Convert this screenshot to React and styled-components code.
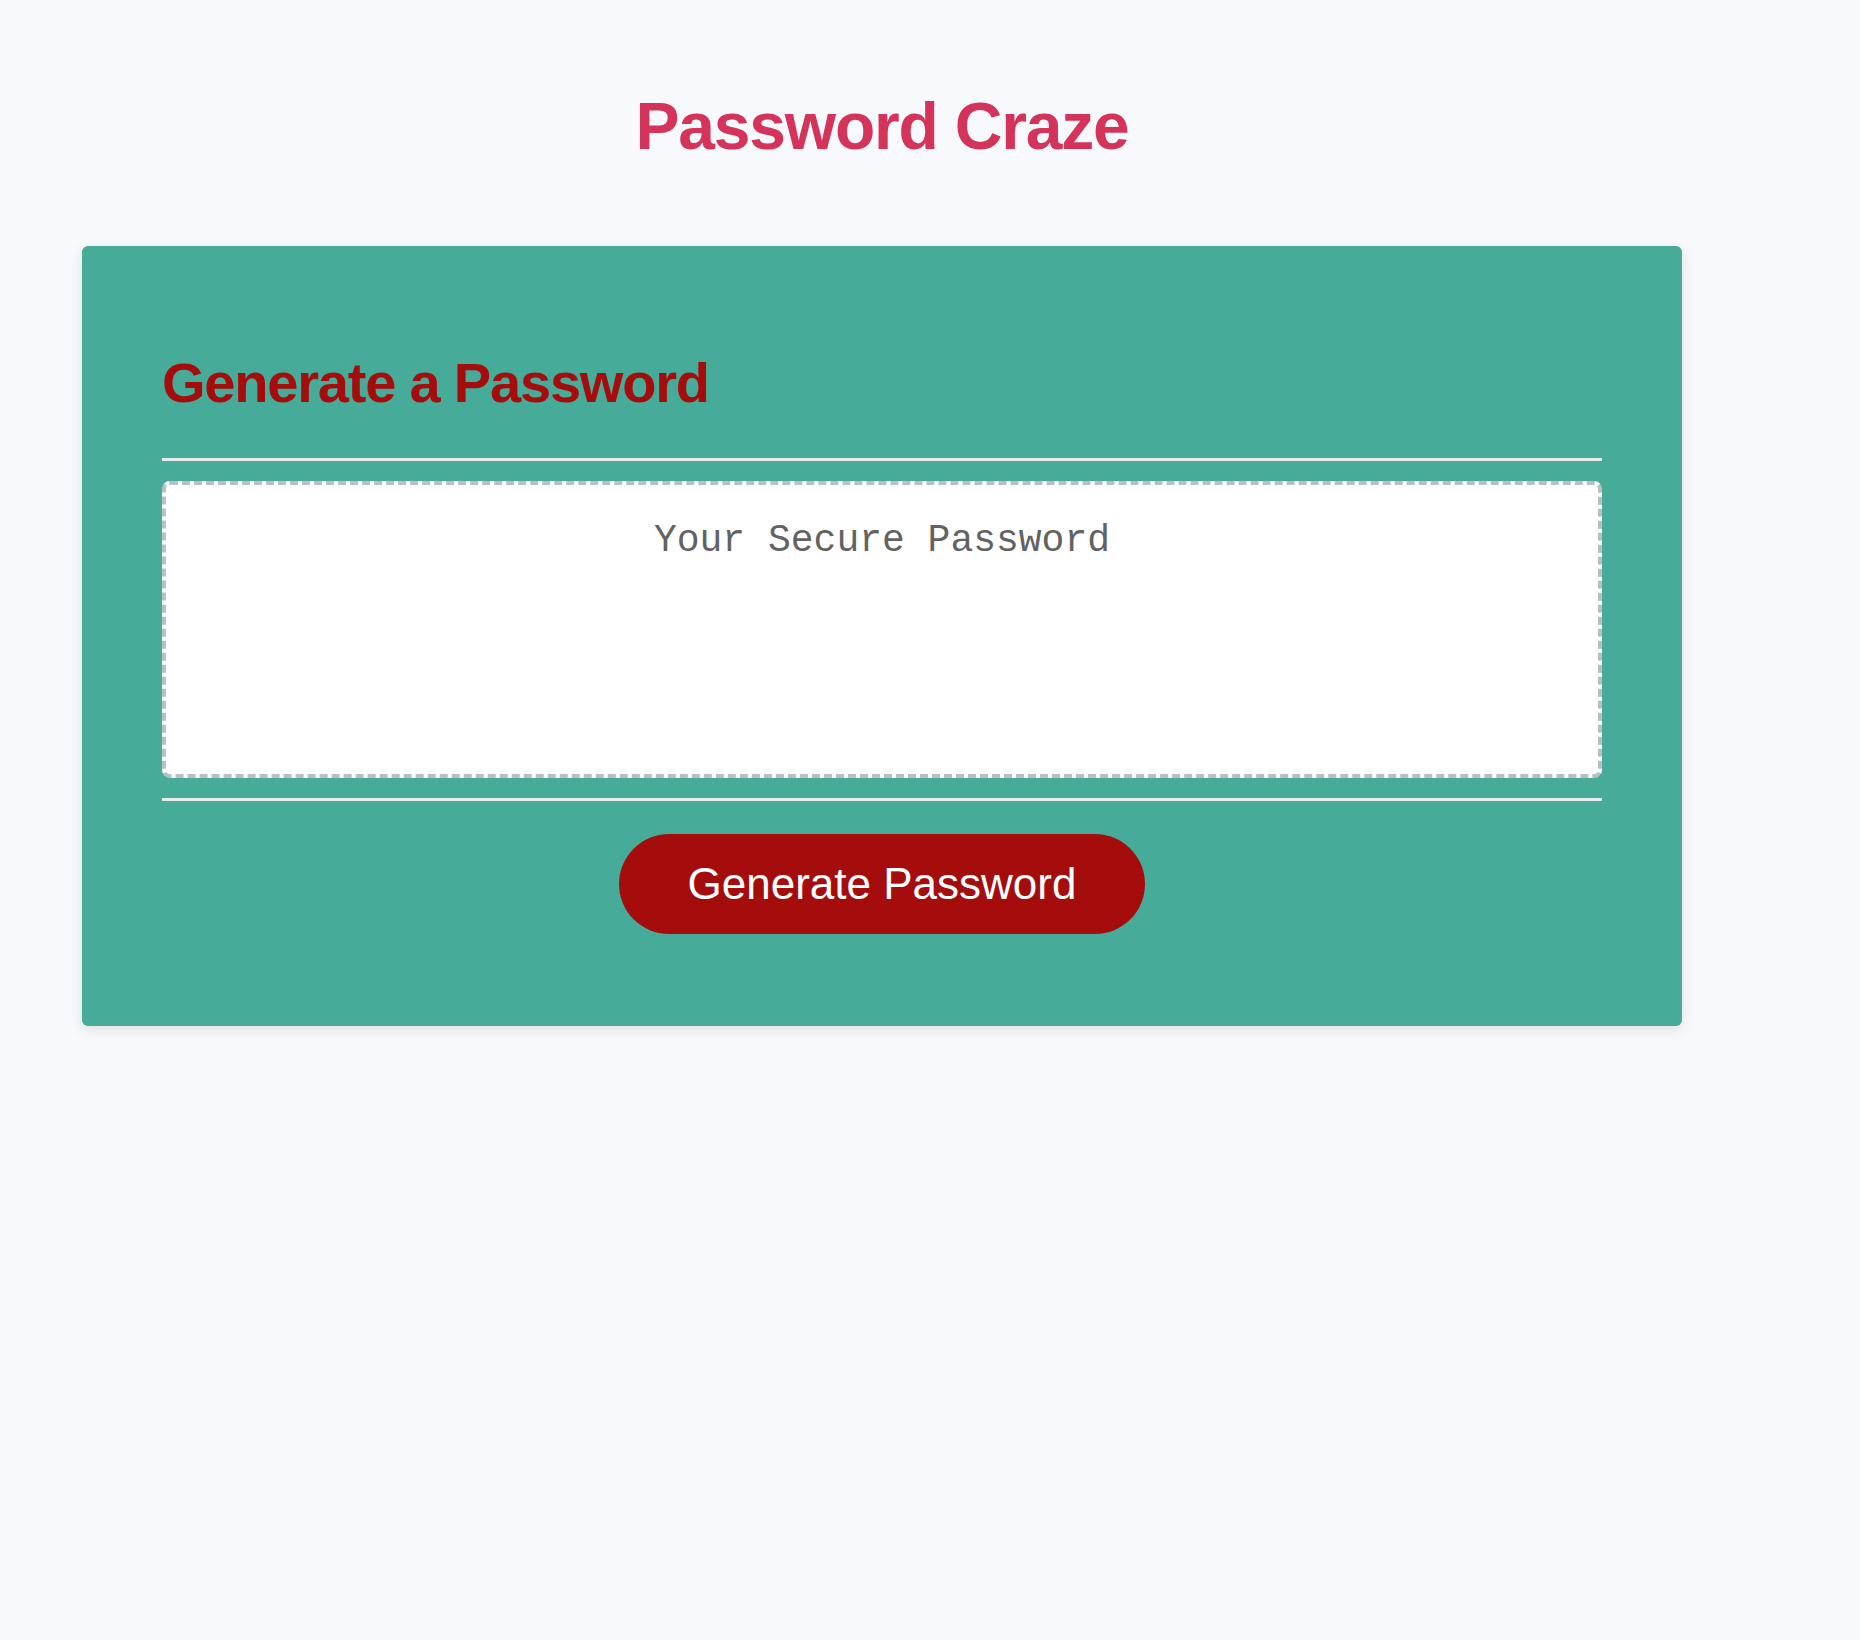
import React from 'react';
import styled, { createGlobalStyle } from 'styled-components';

const GlobalStyle = createGlobalStyle`
  html, body {
    margin: 0;
    padding: 0;
    background: #f8f9fd;
    font-family: "Liberation Sans", Arial, sans-serif;
  }
  * {
    box-sizing: border-box;
  }
`;

const Page = styled.div`
  min-height: 1640px;
  padding: 88px 178px 0 82px;
  display: flex;
  flex-direction: column;
`;

const Title = styled.h1`
  margin: 0 0 82px;
  text-align: center;
  font-size: 66px;
  font-weight: 700;
  letter-spacing: -1.2px;
  line-height: normal;
  color: #d4345a;
`;

const Card = styled.div`
  background: #47ab99;
  border-radius: 6px;
  box-shadow: 0 4px 14px rgba(0, 0, 0, 0.1);
  padding: 104px 80px 92px;
  display: flex;
  flex-direction: column;
`;

const Heading = styled.h2`
  margin: 0 0 43px;
  font-size: 56px;
  font-weight: 700;
  letter-spacing: -1.2px;
  line-height: normal;
  color: #a50d0d;
`;

const Divider = styled.hr`
  margin: 0;
  border: none;
  height: 3px;
  background: #eaebeb;
`;

const PasswordBox = styled.textarea`
  display: block;
  width: 100%;
  height: 297px;
  margin: 20px 0;
  padding: 34px 20px;
  background: #ffffff;
  border: 4px dashed #b9c0c5;
  border-radius: 8px;
  resize: none;
  text-align: center;
  font-family: "Liberation Mono", "Courier New", monospace;
  font-size: 38px;
  color: #5f5f5f;

  &::placeholder {
    color: #626262;
  }
`;

const Actions = styled.div`
  display: flex;
  justify-content: center;
  padding-top: 33px;
`;

const GenerateButton = styled.button`
  height: 100px;
  padding: 0 69px;
  border: none;
  border-radius: 50px;
  background: #a50d0d;
  color: #ffffff;
  font-family: "Liberation Sans", Arial, sans-serif;
  font-size: 44px;
  cursor: pointer;
`;

export default function App() {
  return (
    <>
      <GlobalStyle />
      <Page>
        <Title>Password Craze</Title>
        <Card>
          <Heading>Generate a Password</Heading>
          <Divider />
          <PasswordBox readOnly placeholder="Your Secure Password" />
          <Divider />
          <Actions>
            <GenerateButton>Generate Password</GenerateButton>
          </Actions>
        </Card>
      </Page>
    </>
  );
}
